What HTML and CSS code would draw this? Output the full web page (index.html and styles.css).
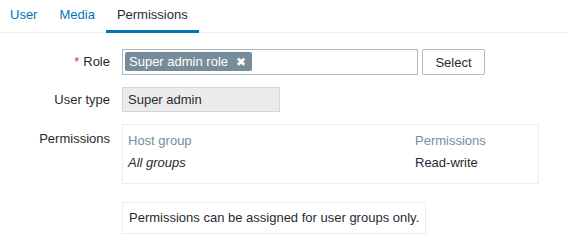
FILE: index.html
```html
<!DOCTYPE html>
<html lang="en">
<head>
    <meta charset="UTF-8">
    <title>User permissions</title>
    <link rel="stylesheet" href="styles.css">
</head>
<body>
    <ul class="tabs">
        <li><a href="#">User</a></li>
        <li><a href="#">Media</a></li>
        <li class="active"><a href="#">Permissions</a></li>
    </ul>

    <div class="form">
        <label class="form-label required">Role</label>
        <div class="form-field role-field">
            <div class="multiselect">
                <span class="tag">Super admin role <span class="tag-remove">&#10006;</span></span>
            </div>
            <button class="btn">Select</button>
        </div>

        <label class="form-label">User type</label>
        <div class="form-field">
            <div class="readonly">Super admin</div>
        </div>

        <label class="form-label label-table">Permissions</label>
        <div class="form-field">
            <table class="perm-table">
                <thead>
                    <tr><th>Host group</th><th>Permissions</th></tr>
                </thead>
                <tbody>
                    <tr><td><em>All groups</em></td><td>Read-write</td></tr>
                </tbody>
            </table>
        </div>

        <div class="form-label"></div>
        <div class="form-field">
            <div class="note">Permissions can be assigned for user groups only.</div>
        </div>
    </div>
</body>
</html>
```

FILE: styles.css
```css
body {
    margin: 0;
    font-family: "Liberation Sans", Arial, sans-serif;
    font-size: 13px;
    color: #1f2c33;
    background: #fff;
}

.tabs {
    display: flex;
    list-style: none;
    margin: 0;
    padding: 0;
    border-bottom: 1px solid #ebeef0;
    height: 32px;
}

.tabs li {
    padding: 0 11px;
    border-bottom: 3px solid transparent;
    height: 30px;
    line-height: 30px;
}

.tabs li:first-child {
    padding-left: 10px;
}

.tabs a {
    color: #0275b8;
    text-decoration: none;
}

.tabs .active {
    border-bottom-color: #0275b8;
}

.tabs .active a {
    color: #1f2c33;
}

.form {
    display: grid;
    grid-template-columns: 110px 1fr;
    column-gap: 12px;
    row-gap: 12px;
    padding-top: 16px;
}

.form-label {
    text-align: right;
    padding-top: 6px;
    line-height: 14px;
}

.label-table {
    padding-top: 8px;
}

.required::before {
    content: "*";
    color: #e33734;
    margin-right: 4px;
}

.role-field {
    display: flex;
    gap: 4px;
}

.multiselect {
    box-sizing: border-box;
    width: 296px;
    height: 26px;
    border: 1px solid #acbbc2;
    padding: 2px;
}

.tag {
    display: inline-block;
    height: 19px;
    line-height: 19px;
    padding: 0 6px 0 4px;
    background: #768d99;
    color: #fff;
    border-radius: 2px;
}

.tag-remove {
    font-size: 12px;
    margin-left: 4px;
}

.btn {
    box-sizing: border-box;
    width: 63px;
    height: 26px;
    font-family: inherit;
    font-size: 13px;
    color: #1f2c33;
    background: #fff;
    border: 1px solid #acbbc2;
    border-radius: 2px;
}

.readonly {
    box-sizing: border-box;
    width: 158px;
    height: 25px;
    line-height: 23px;
    padding: 0 5px;
    background: #ebebeb;
    border: 1px solid #d5d5d5;
}

.perm-table {
    box-sizing: border-box;
    width: 417px;
    border: 1px solid #ebeef0;
    border-collapse: collapse;
}

.perm-table th,
.perm-table td {
    text-align: left;
    padding: 4px 5px;
    line-height: 14px;
}

.perm-table th {
    font-weight: normal;
    color: #768d99;
    padding-top: 9px;
}

.perm-table td {
    padding-bottom: 13px;
}

.perm-table th:last-child,
.perm-table td:last-child {
    width: 118px;
}

.note {
    display: inline-block;
    margin-top: 6px;
    padding: 8px 6px;
    line-height: 14px;
    border: 1px solid #ebeef0;
}
```
